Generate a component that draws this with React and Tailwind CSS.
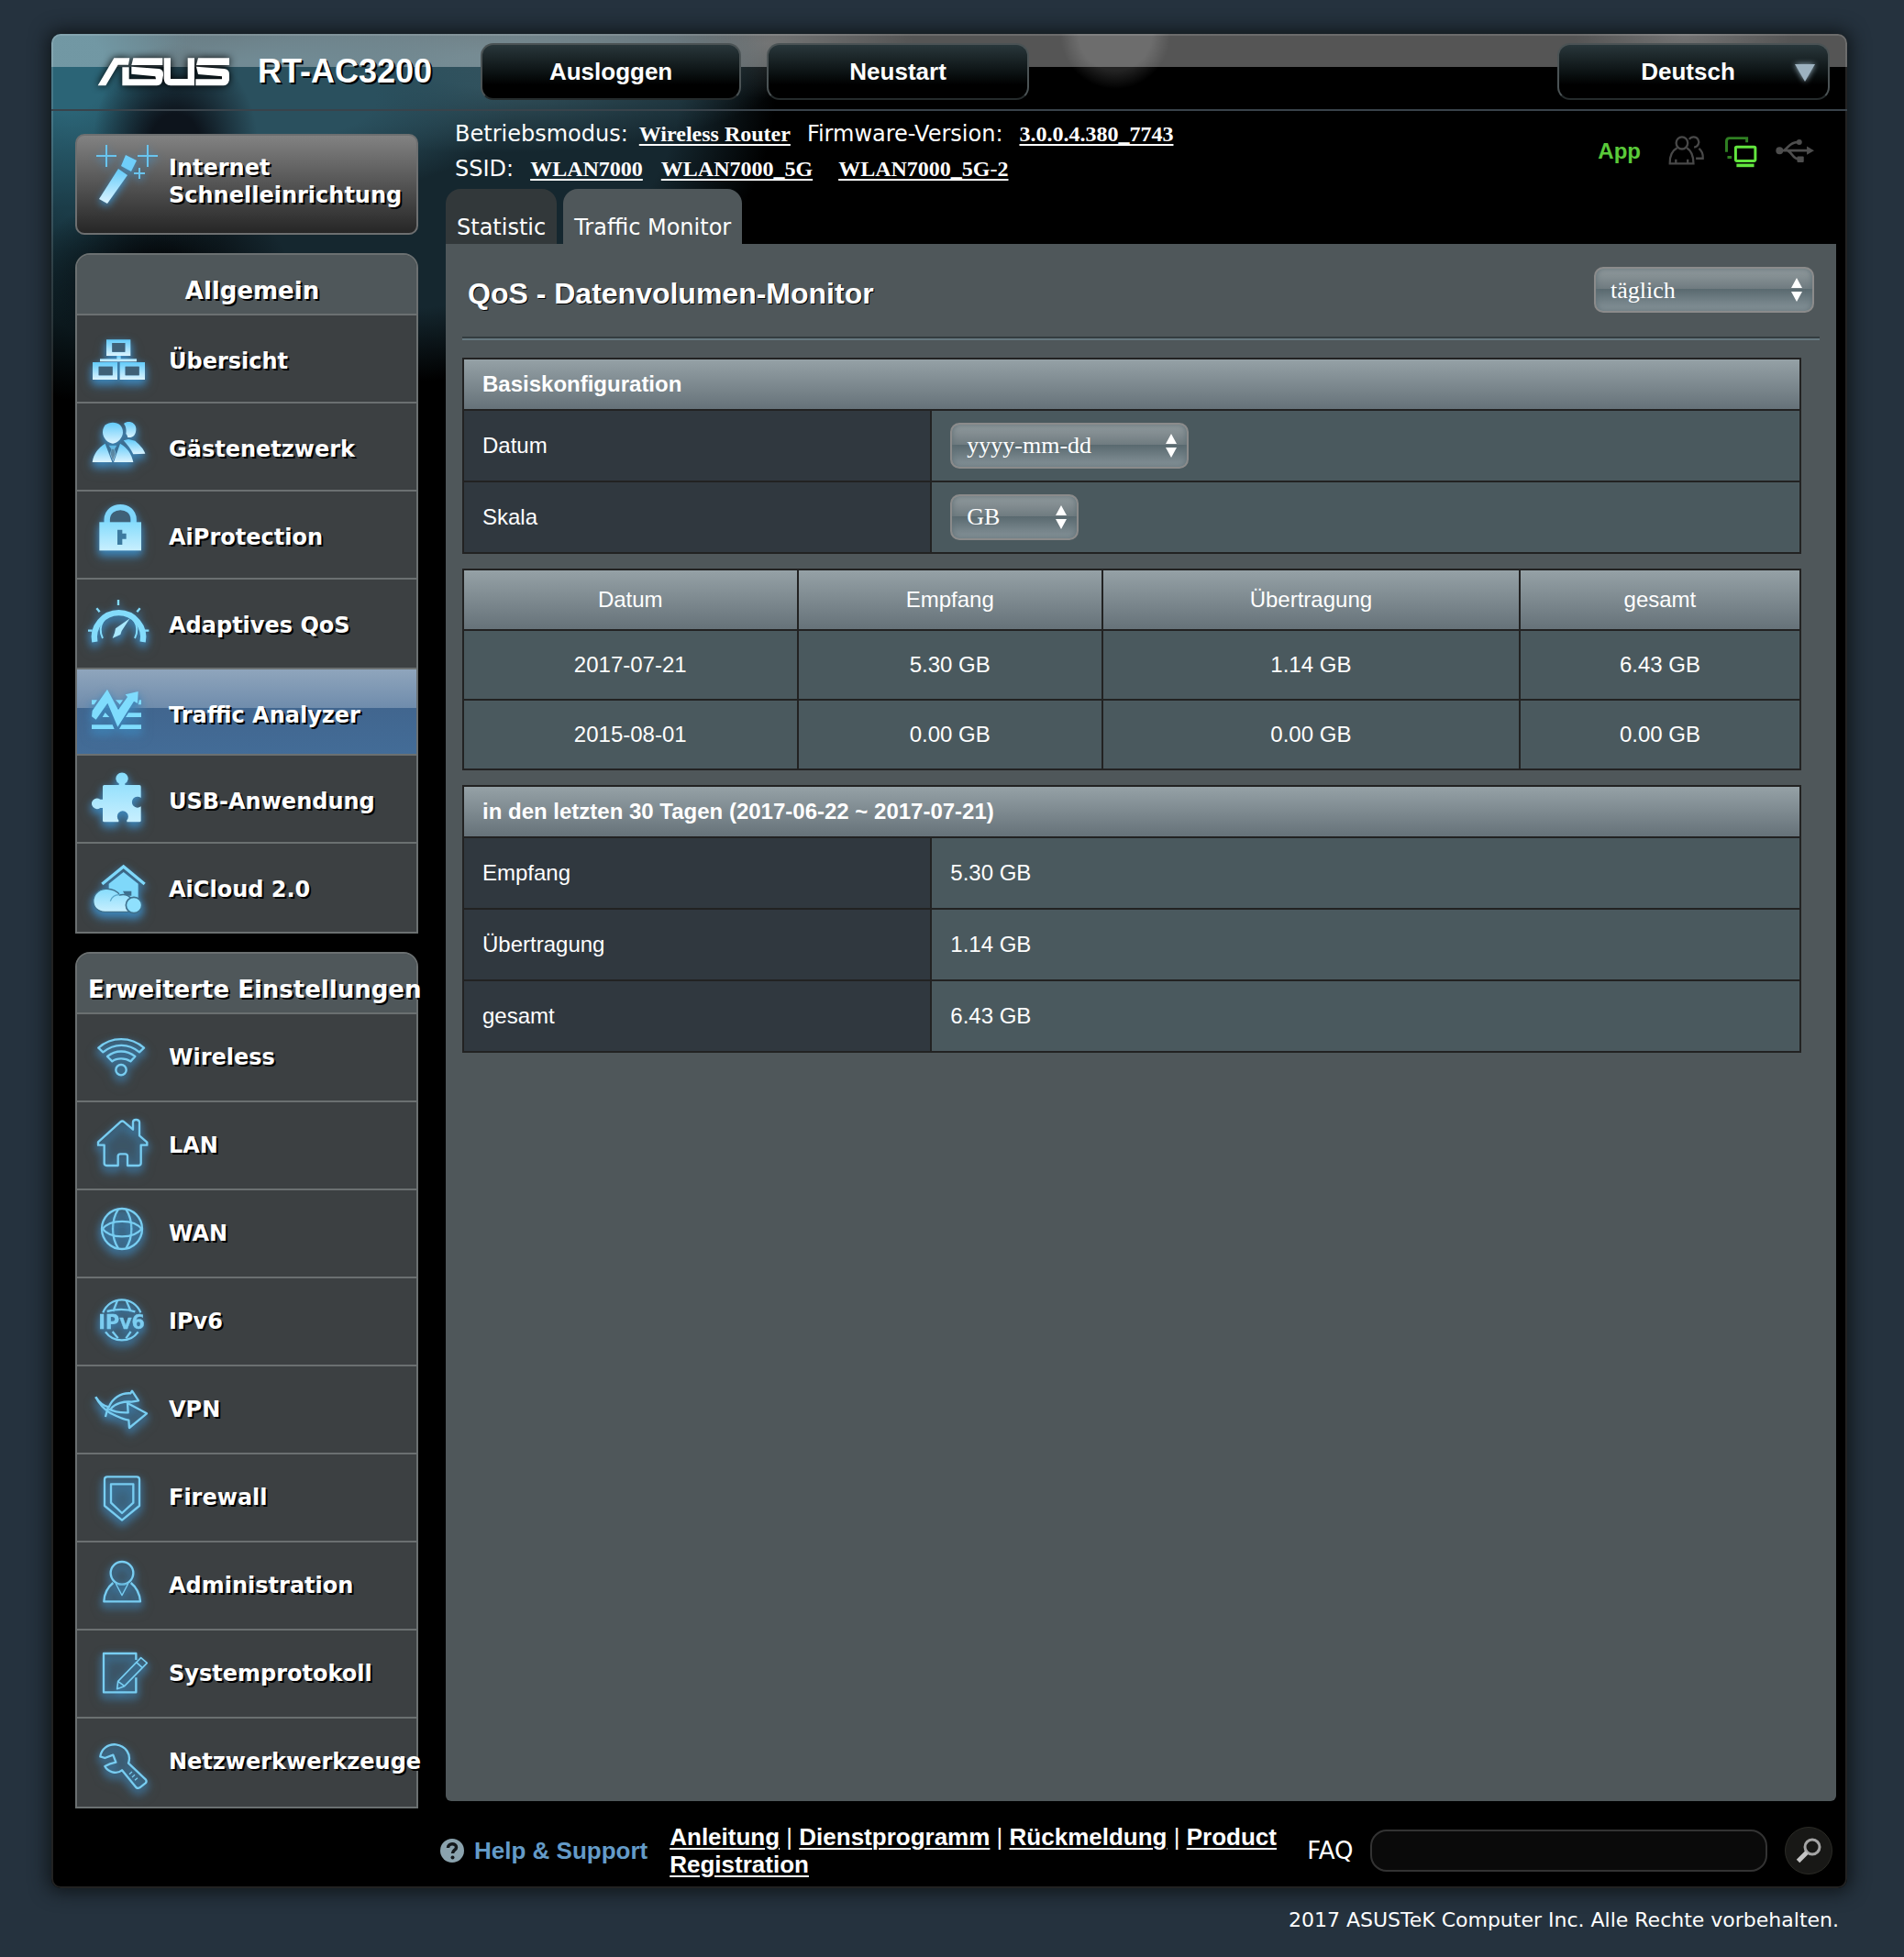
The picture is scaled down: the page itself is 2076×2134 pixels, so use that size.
import React from "react";

const verdana = "font-['DejaVu_Sans','Verdana',sans-serif]";
const arial = "font-['Liberation_Sans','Arial',sans-serif]";
const times = "font-['Liberation_Serif','Times_New_Roman',serif]";

const DARK = "#3f6178";

/* Menu icons: each viewBox spans one menu row at three units per pixel. */
const solidIcons = {
  overview: {
    box: "72 252 300 282",
    art: (
      <g fill="url(#ice)">
        <path fillRule="evenodd" d="M168 331H247V384H168ZM187 342V371H229V342Z" />
        <path d="M202 384H215V394H267V403H147V394H202Z" />
        <path fillRule="evenodd" d="M123 405H204V462H123ZM143 419V448H188V419Z" />
        <path fillRule="evenodd" d="M212 405H294V462H212ZM230 419V448H275V419Z" />
        <g fill={DARK}>
          <path d="M187 342H229V371H187ZM143 419H188V448H143ZM230 419H275V448H230Z" />
        </g>
      </g>
    ),
  },
  guests: {
    box: "72 540 300 282",
    art: (
      <g fill="url(#ice)">
        <path d="M225 606C240 594 264 602 265 622C266 640 256 653 238 651C236 645 234 640 232 640C234 626 232 614 225 606Z" />
        <path d="M156 634C156 612 170 602 189 602C208 602 222 614 222 634C222 652 204 671 189 671C174 671 156 654 156 634Z" />
        <path d="M224 661L240 657L262 662C277 675 290 688 295 704L256 706C248 689 238 676 224 661Z" />
        <path d="M122 732C126 704 142 684 164 671L187 732Z" />
        <path d="M256 732C250 704 236 684 213 671L192 732Z" />
        <path d="M176 677H202L195 689L199 705L190 729L180 705L184 689Z" fillOpacity=".75" />
        <path d="M185 689L193 689L197 705L189 726L182 705Z" fill={DARK} fillOpacity=".6" />
      </g>
    ),
  },
  lock: {
    box: "72 828 300 282",
    art: (
      <g>
        <path d="M180 930V918C182 878 244 878 246 918V930Z" fill={DARK} />
        <path d="M170 932V919C172 866 256 866 257 919V932" fill="none" stroke="#7fd6fb" strokeWidth="19" />
        <rect x="145" y="928" width="137" height="93" fill="url(#ice2)" />
        <path d="M204 953H220V965H233V983H220V1002H204Z" fill="#3d7aa0" />
      </g>
    ),
  },
  gauge: {
    box: "72 36 300 282",
    art: (
      <g stroke="#84dcfb" fill="none">
        <path d="M130 240A80 80 0 1 1 287 240" strokeWidth="19" />
        <path d="M156 228A59 59 0 1 1 261 228" strokeWidth="6" />
        <path d="M207 102V120M108 203H122M294 203H307M136 130L146 142M278 130L268 142" strokeWidth="7" />
        <path d="M245 163L218 204L214 216L188 228L195 210L198 196Z" fill="#a9e8fd" stroke="none" />
      </g>
    ),
  },
  traffic: {
    box: "72 330 300 282",
    art: (
      <g fill="#7fdcfd">
        <path d="M122 465L171 395L207 462L237 420L230 412L272 402L270 441L258 434L205 518L172 440L134 494L120 484Z" />
        <path d="M120 511H188L194 525H120ZM218 511H282V525H210ZM240 472H282V486H231ZM155 486L164 471L178 486ZM120 430H138L128 445H120ZM198 430H222L212 445ZM275 430H282V445H272Z" />
      </g>
    ),
  },
  puzzle: {
    box: "72 612 300 282",
    art: (
      <path
        fill="url(#ice2)"
        d="M156 713q0-5 5-5H209V703A20 19 0 1 1 229 703V708H276q5 0 5 5V750A18 18 0 1 0 281 778V824q0 5-5 5H235V823A18 18 0 1 0 208 823V829H161q-5 0-5-5V783H148A18 17 0 1 1 148 755H156Z"
      />
    ),
  },
  cloud: {
    box: "72 900 300 282",
    art: (
      <g>
        <path d="M154 1032L224 975L293 1032" fill="none" stroke="#7fd8fa" strokeWidth="10" />
        <path d="M224 993L272 1031V1080H176V1031Z" fill="#7fd8fa" />
        <path d="M222 1055H250V1070H230Z" fill="#3d6f8e" />
        <path
          d="M166 1123C112 1126 112 1052 165 1048C186 1046 205 1056 211 1068C226 1064 240 1068 250 1080V1123Z"
          fill="url(#ice2)"
          stroke="#3f708c"
          strokeWidth="4"
        />
        <path d="M181 1088C186 1072 196 1066 212 1067" fill="none" stroke="#5aa8cc" strokeWidth="4" />
        <circle cx="258" cy="1101" r="26" fill="#8fe0fd" stroke="#3f708c" strokeWidth="5" />
      </g>
    ),
  },
};

const lineIcons = {
  wireless: {
    box: "72 258 300 282",
    art: (
      <>
        <path d="M142 368C184 330 248 330 291 368L276 382C240 352 194 352 157 382Z" />
        <path d="M171 396C198 374 234 374 262 396L247 412C230 400 202 400 187 412Z" />
        <circle cx="216" cy="440" r="17" />
      </>
    ),
  },
  lan: {
    box: "72 546 300 282",
    art: (
      <path d="M141 676L214 610q6-5 12 0L255 635V611q0-8 10-8t11 8V655L301 677V686H281V745q0 8-8 8H237V722q0-7-8-7H214q-8 0-8 7V753H169q-8 0-8-8V686H141Z" />
    ),
  },
  wan: {
    box: "72 834 300 282",
    art: (
      <>
        <circle cx="219" cy="960" r="66" strokeWidth="7" />
        <path d="M207 896C183 932 183 988 207 1024M232 896C256 932 256 988 232 1024" />
        <path d="M154 962C180 927 258 927 285 962M154 958C180 994 258 994 285 958" />
      </>
    ),
  },
  ipv6: {
    box: "72 1122 300 282",
    art: (
      <>
        <path d="M157 1234A66 66 0 0 1 280 1234M165 1297A66 66 0 0 0 272 1297" />
        <path d="M205 1192L190 1230M232 1192L248 1230M170 1230C200 1222 236 1222 262 1231M188 1296L206 1318M248 1296L232 1318" />
        <text
          x="142"
          y="1287"
          fontSize="62"
          fill="#7ccdf0"
          fillOpacity="1"
          strokeWidth="1"
          className="font-['DejaVu_Sans',sans-serif] [text-shadow:none]"
        >
          IPv6
        </text>
      </>
    ),
  },
  vpn: {
    box: "72 30 300 282",
    art: (
      <>
        <path d="M133 130C146 150 158 160 176 163C188 134 214 116 247 118L252 110L273 142L250 146C226 144 196 150 182 170" />
        <path d="M133 130C144 152 156 168 180 182C200 192 220 203 241 206L243 231L300 184L237 150L239 181C216 182 192 178 172 168L165 195" />
      </>
    ),
  },
  firewall: {
    box: "72 318 300 282",
    art: (
      <>
        <path d="M171 391H267q9 0 9 9V486L219 533L162 486V400q0-9 9-9Z" />
        <path d="M183 415H256V476L219 510L183 476Z" />
      </>
    ),
  },
  admin: {
    box: "72 606 300 282",
    art: (
      <>
        <circle cx="219" cy="706" r="37" />
        <path d="M190 738C170 754 161 775 160 799H279C277 775 268 754 248 738" />
        <path d="M199 741L219 779L239 741" strokeWidth="4" />
      </>
    ),
  },
  log: {
    box: "72 894 300 282",
    art: (
      <>
        <path d="M265 990V969H159V1096H265V1048" />
        <path d="M203 1085L206 1060L281 983L301 1000L227 1076ZM206 1060L227 1076M266 998L285 1015" strokeWidth="5" />
      </>
    ),
  },
  tools: {
    box: "72 1182 300 282",
    art: (
      <>
        <path d="M148 1306C151 1282 172 1265 199 1267C232 1271 250 1300 240 1328L297 1382q4 6-1 11l-19 15q-6 4-12-1L219 1351C200 1366 172 1356 163 1338L180 1330L199 1325L190 1301L163 1311Z" />
        <path d="M243 1364L252 1356M252 1374L261 1366M261 1384L270 1376" strokeWidth="4" />
      </>
    ),
  },
};

function MenuIcon({ name }) {
  const solid = solidIcons[name];
  const icon = solid || lineIcons[name];
  return (
    <svg
      viewBox={icon.box}
      className="h-[94px] w-[100px] shrink-0 [filter:drop-shadow(0_4px_4px_#3d86ba)_drop-shadow(0_3px_4px_#3d86ba88)]"
      aria-hidden="true"
    >
      {solid ? (
        icon.art
      ) : (
        <g fill="#3d7ba8" fillOpacity=".12" stroke="#78cdf1" strokeWidth="7" strokeLinejoin="round">
          {icon.art}
        </g>
      )}
    </svg>
  );
}

const general = [
  ["overview", "Übersicht", "h-24"],
  ["guests", "Gästenetzwerk", "h-24"],
  ["lock", "AiProtection", "h-24"],
  ["gauge", "Adaptives QoS", "h-[98px]"],
  ["traffic", "Traffic Analyzer", "h-[94px] bg-[linear-gradient(#8fa5bc_0,#6f8cac_46%,#41668f_46%,#436c97_100%)]"],
  ["puzzle", "USB-Anwendung", "h-24"],
  ["cloud", "AiCloud 2.0", "h-24"],
];

const advanced = [
  ["wireless", "Wireless"],
  ["lan", "LAN"],
  ["wan", "WAN"],
  ["ipv6", "IPv6"],
  ["vpn", "VPN"],
  ["firewall", "Firewall"],
  ["admin", "Administration"],
  ["log", "Systemprotokoll"],
  ["tools", "Netzwerkwerkzeuge"],
].map(([icon, label]) => [icon, label, "h-24"]);

function MenuSection({ title, items, labelClass }) {
  return (
    <section className="rounded-t-2xl border-2 border-[#6b7071] bg-[#3c4042]">
      <h2 className="flex h-[66px] items-center rounded-t-[14px] border-b-2 border-[#6b7071] bg-[#4f575a] pl-3 pt-3.5 text-[26px] leading-8">
        <span className="min-w-full whitespace-nowrap text-center">{title}</span>
      </h2>
      <ul>
        {items.map(([icon, label, cls]) => (
          <li key={label} className={`border-b-2 border-[#6b7071] last:border-b-0 ${cls}`}>
            <a href="#" className="flex h-full items-start">
              <MenuIcon name={icon} />
              <span className={`flex h-[94px] items-center whitespace-nowrap ${labelClass}`}>{label}</span>
            </a>
          </li>
        ))}
      </ul>
    </section>
  );
}

function Sidebar() {
  return (
    <nav className={`flex w-[374px] shrink-0 flex-col gap-5 pt-[25px] text-2xl font-bold text-white ${verdana} [text-shadow:2px_2px_0_#000]`}>
      <a
        href="#"
        className="flex h-[110px] rounded-[10px] border-2 border-[#6d6f70] bg-[linear-gradient(#828282,#262626)]"
      >
        <svg viewBox="84 148 100 106" className="h-[106px] w-[100px] shrink-0 drop-shadow-[0_3px_4px_#3d8fc6]" aria-hidden="true">
          <path d="M129 184L139 191L117 222L108 217Z" fill="url(#ice)" />
          <path d="M137 169L149 175L143 187L132 181Z" fill="#6fcefa" />
          <path
            d="M105 170H127M116 158V182M150 170H172M161 158V182M146 189H158M152 183V195"
            stroke="#69c4ee"
            strokeWidth="2"
          />
        </svg>
        <span className="pt-5 leading-[30px]">
          Internet
          <br />
          Schnelleinrichtung
        </span>
      </a>
      <MenuSection title="Allgemein" items={general} labelClass="pt-1.5" />
      <MenuSection title="Erweiterte Einstellungen" items={advanced} labelClass="" />
    </nav>
  );
}

const headerButton =
  "h-[62px] rounded-[14px] border-2 border-[#4b5355] border-b-[#252b2c] bg-[linear-gradient(#29373b,#0a1011_55%,#000_75%)] text-[26px] font-bold text-white";

function Header() {
  return (
    <header className={`flex h-[84px] items-center rounded-t-[10px] border-b-2 border-[#39434b] bg-[linear-gradient(#ffffff55_36px,transparent_36px)] pl-[50px] pr-[19px] text-white ${arial}`}>
      <svg viewBox="48 40 438 99" className="h-[33px] w-[146px] drop-shadow-[0_0_4px_#000]" role="img" aria-label="ASUS">
        <g fill="#fff">
          <path d="M50 134L103 44H154L150 66H116L76 134Z" />
          <path d="M130 74H152V113H240L238 104L160 96V72L250 79Q266 82 264 100L260 122Q256 134 242 134H130Z" />
          <path d="M166 44H262V67H160Z" />
          <path d="M266 44H288V112H344V44H366V134H288Q268 134 266 112Z" />
          <path d="M378 44H480V67H372Z" />
          <path d="M372 72L464 79Q482 82 480 100V116Q476 134 460 134H370V113H456V104L378 97Z" />
        </g>
      </svg>
      <h1 className="ml-[29px] text-[36px] font-bold leading-10 [text-shadow:2px_2px_0_#000]">RT-AC3200</h1>
      <div className="ml-[53px] flex gap-7">
        <button type="button" className={`w-[284px] ${headerButton}`}>
          Ausloggen
        </button>
        <button type="button" className={`w-[286px] ${headerButton}`}>
          Neustart
        </button>
      </div>
      <div className="relative ml-auto">
        <select
          aria-label="Sprache"
          className={`w-[297px] appearance-none pr-3 text-center [text-align-last:center] ${headerButton}`}
        >
          <option>Deutsch</option>
        </select>
        <svg viewBox="0 0 22 20" className="pointer-events-none absolute right-4 top-[22px] h-5 w-[22px] drop-shadow-[0_0_3px_#9ab4c4]" aria-hidden="true">
          <path d="M0 1H22L11 20Z" fill="#9db2c0" />
        </svg>
      </div>
    </header>
  );
}

function StatusIcons() {
  return (
    <svg viewBox="235 20 495 115" className="ml-7 h-[38px] w-[165px]" aria-hidden="true">
      <g fill="none" stroke="#484848" strokeWidth="7">
        <path d="M308 38A17 17 0 1 1 324 64M340 68C350 76 354 88 353 101H330" />
        <ellipse cx="284" cy="50" rx="19" ry="20" />
        <path d="M268 66C250 76 243 96 244 118H322C322 96 316 76 300 66M264 118V104M303 118V104" />
      </g>
      <g fill="none">
        <path d="M431 80V44Q431 34 441 34H498V48M434 97H448" stroke="#2f7f22" strokeWidth="9" />
        <rect x="461" y="63" width="65" height="46" rx="4" stroke="#62e53e" strokeWidth="9" />
        <path d="M464 124H522" stroke="#62e53e" strokeWidth="11" />
      </g>
      <g fill="none" stroke="#4e4e4e" strokeWidth="8">
        <path d="M606 75H706M620 75C636 66 638 48 668 47M634 76C650 84 648 103 672 104" />
        <g fill="#4e4e4e" stroke="none">
          <circle cx="606" cy="75" r="12" />
          <path d="M696 61L720 75L696 89Z" />
          <circle cx="671" cy="47" r="9" />
          <rect x="664" y="94" width="22" height="20" rx="3" />
        </g>
      </g>
    </svg>
  );
}

function TopInfo() {
  const link = `font-bold underline underline-offset-[3px] decoration-2 ${times}`;
  return (
    <div className="flex justify-between pl-2.5 pr-5 pt-1.5 text-2xl text-white">
      <div className={`leading-[38px] ${verdana}`}>
        <div className="flex h-[38px] items-baseline">
          <span>Betriebsmodus:</span>
          <a href="#" className={`ml-3 ${link}`}>Wireless Router</a>
          <span className="ml-[18px]">Firmware-Version:</span>
          <a href="#" className={`ml-[18px] ${link}`}>3.0.0.4.380_7743</a>
        </div>
        <div className="flex h-[38px] items-baseline">
          <span>SSID:</span>
          <a href="#" className={`ml-[18px] ${link}`}>WLAN7000</a>
          <a href="#" className={`ml-5 ${link}`}>WLAN7000_5G</a>
          <a href="#" className={`ml-7 ${link}`}>WLAN7000_5G-2</a>
        </div>
      </div>
      <div className="flex h-[76px] items-center">
        <a href="#" className={`font-bold text-[#5aca3a] ${arial}`}>App</a>
        <StatusIcons />
      </div>
    </div>
  );
}

function GlossSelect({ label, value, width }) {
  return (
    <span className={`relative block h-[50px] ${width}`}>
      <select
        aria-label={label}
        className={`block h-[50px] w-full appearance-none rounded-[10px] border-2 border-[#8b8b8b] bg-[linear-gradient(#929b9e,#6f7b80_48%,#59696f_48%,#87949a)] px-4 text-[26px] text-white shadow-[inset_0_0_6px_#5f6f75] ${times}`}
      >
        <option>{value}</option>
      </select>
      <svg viewBox="0 0 12 26" className="pointer-events-none absolute right-[13px] top-3 h-[26px] w-3" aria-hidden="true">
        <path d="M6 0L12 11H0ZM6 26L12 15H0Z" fill="#fff" />
      </svg>
    </span>
  );
}

const headBg = "bg-[linear-gradient(#95a1a6,#667279)]";

function DetailTable({ title, rows }) {
  return (
    <table className="w-full table-fixed border-collapse text-left">
      <colgroup>
        <col className="w-[35%]" />
        <col />
      </colgroup>
      <thead>
        <tr>
          <th colSpan={2} className={`h-14 border-2 border-[#222] px-5 py-0 font-bold ${headBg}`}>{title}</th>
        </tr>
      </thead>
      <tbody>
        {rows.map(([name, value]) => (
          <tr key={name}>
            <th scope="row" className="h-[78px] border-2 border-[#222] bg-[#30383f] px-5 py-0 font-normal">{name}</th>
            <td className="h-[78px] border-2 border-[#222] bg-[#4a595e] px-5 py-0">{value}</td>
          </tr>
        ))}
      </tbody>
    </table>
  );
}

function TrafficTable() {
  const rows = [
    ["2017-07-21", "5.30 GB", "1.14 GB", "6.43 GB"],
    ["2015-08-01", "0.00 GB", "0.00 GB", "0.00 GB"],
  ];
  return (
    <table className="w-full table-fixed border-collapse text-center">
      <colgroup>
        <col className="w-[25%]" />
        <col className="w-[22.8%]" />
        <col className="w-[31.2%]" />
        <col className="w-[21%]" />
      </colgroup>
      <thead>
        <tr>
          {["Datum", "Empfang", "Übertragung", "gesamt"].map((h) => (
            <th key={h} className={`h-[66px] border-2 border-[#222] p-0 font-normal ${headBg}`}>{h}</th>
          ))}
        </tr>
      </thead>
      <tbody>
        {rows.map((row) => (
          <tr key={row[0]}>
            {row.map((cell, i) => (
              <td key={i} className="h-[76px] border-2 border-[#222] bg-[#4a595e] p-0">{cell}</td>
            ))}
          </tr>
        ))}
      </tbody>
    </table>
  );
}

function Content() {
  return (
    <main className={`flex-1 rounded-b-md bg-[#4f575a] px-[18px] pt-[25px] text-white ${arial}`}>
      <div className="flex items-center justify-between px-1.5">
        <h2 className="mt-2 text-[32px] font-bold leading-9 [text-shadow:1px_1px_0_#000]">QoS - Datenvolumen-Monitor</h2>
        <GlossSelect label="Zeitraum" value="täglich" width="w-60" />
      </div>
      <div className="mb-[19px] mt-[26px] h-1 border-y-2 border-b-[#667880] border-t-[#343d40]" />
      <div className="mr-5 flex flex-col gap-4 text-2xl leading-8">
        <DetailTable
          title="Basiskonfiguration"
          rows={[
            ["Datum", <GlossSelect label="Datum" value="yyyy-mm-dd" width="w-[260px]" />],
            ["Skala", <GlossSelect label="Skala" value="GB" width="w-[140px]" />],
          ]}
        />
        <TrafficTable />
        <DetailTable
          title="in den letzten 30 Tagen (2017-06-22 ~ 2017-07-21)"
          rows={[
            ["Empfang", "5.30 GB"],
            ["Übertragung", "1.14 GB"],
            ["gesamt", "6.43 GB"],
          ]}
        />
      </div>
    </main>
  );
}

function Footer() {
  const link = "font-bold underline underline-offset-[3px] decoration-2";
  return (
    <footer className={`flex h-[87px] items-center pl-[423px] pr-4 pt-1 text-[26px] leading-[30px] text-white ${arial}`}>
      <svg viewBox="0 0 28 28" className="h-7 w-7 shrink-0" aria-hidden="true">
        <circle cx="14" cy="14" r="13" fill="#8ba3ae" />
        <path d="M9.500 11C9.500 5.500 18.500 5.500 18.500 10.500C18.500 13.500 14.500 13.500 14.500 17" fill="none" stroke="#14191c" strokeWidth="3.500" />
        <circle cx="14.500" cy="21.500" r="2" fill="#14191c" />
      </svg>
      <a href="#" className="ml-2.5 shrink-0 font-bold text-[#649bc8]">Help &amp; Support</a>
      <p className="ml-6 w-[671px] shrink-0">
        <a href="#" className={link}>Anleitung</a> |{" "}
        <a href="#" className={link}>Dienstprogramm</a> |{" "}
        <a href="#" className={link}>Rückmeldung</a> |{" "}
        <a href="#" className={link}>Product Registration</a>
      </p>
      <label htmlFor="faq" className={`ml-6 ${verdana}`}>FAQ</label>
      <input id="faq" type="text" className="ml-[18px] h-[46px] min-w-0 flex-1 rounded-[18px] border-2 border-[#333] bg-[#0a0a0a] px-4 text-white" />
      <button
        type="button"
        aria-label="Suchen"
        className="ml-[19px] flex h-[52px] w-[52px] shrink-0 items-center justify-center rounded-full border border-[#2b2b26] bg-[#181816]"
      >
        <svg viewBox="0 0 28 28" className="h-7 w-7" fill="none" aria-hidden="true">
          <circle cx="18" cy="10" r="8" stroke="#a5a5a5" strokeWidth="3" />
          <path d="M12 16L2.500 25.500" stroke="#c4c4c4" strokeWidth="5" />
        </svg>
      </button>
    </footer>
  );
}

export default function App() {
  return (
    <div className="min-h-screen bg-[#25323e] pl-14 pr-[62px] pt-[37px]">
      <svg className="absolute h-0 w-0" aria-hidden="true">
        <defs>
          <linearGradient id="ice" x1="0" y1="0" x2="0" y2="1">
            <stop offset="0" stopColor="#62cbfa" />
            <stop offset="1" stopColor="#dcf4ff" />
          </linearGradient>
          <linearGradient id="ice2" x1="0" y1="0" x2="0" y2="1">
            <stop offset="0" stopColor="#86dcfc" />
            <stop offset="1" stopColor="#c8effe" />
          </linearGradient>
        </defs>
      </svg>
      <div className="rounded-[10px] bg-black bg-[radial-gradient(ellipse_90px_110px_at_135px_120px,#0d141c_30%,transparent),radial-gradient(ellipse_140px_90px_at_120px_260px,#05090c_20%,transparent),radial-gradient(ellipse_130px_150px_at_20px_40px,#2b6476_30%,transparent),radial-gradient(ellipse_260px_110px_at_250px_70px,#2a505e_40%,transparent),radial-gradient(ellipse_320px_90px_at_480px_40px,#33525d_20%,transparent),radial-gradient(ellipse_180px_340px_at_30px_60px,#1b3c48_40%,transparent),radial-gradient(ellipse_420px_320px_at_370px_60px,#15272f_75%,transparent),radial-gradient(ellipse_160px_60px_at_780px_10px,#2e3030,transparent),radial-gradient(circle_at_1160px_0px,#242424_40px,transparent_60px),radial-gradient(ellipse_120px_60px_at_1780px_0px,#2c2c2c,transparent)] shadow-[0_0_20px_4px_#10161a,inset_0_0_0_2px_#ffffff22]">
        <Header />
        <div className="flex gap-[30px] pl-[26px] pr-3">
          <Sidebar />
          <div className="flex min-w-0 flex-1 flex-col pb-2">
            <TopInfo />
            <div className={`mt-[3px] flex h-[60px] gap-[7px] text-2xl leading-6 text-white ${verdana}`}>
              <a href="#" className="flex items-end rounded-t-2xl bg-[#32383a] px-3 pb-1.5">Statistic</a>
              <a href="#" aria-current="page" className="flex items-end rounded-t-2xl bg-[#4f575a] px-3 pb-1.5">Traffic Monitor</a>
            </div>
            <Content />
          </div>
        </div>
        <Footer />
      </div>
      <p className={`mt-5 pr-[9px] text-right text-[22px] leading-[30px] text-white ${verdana}`}>
        2017 ASUSTeK Computer Inc. Alle Rechte vorbehalten.
      </p>
    </div>
  );
}
